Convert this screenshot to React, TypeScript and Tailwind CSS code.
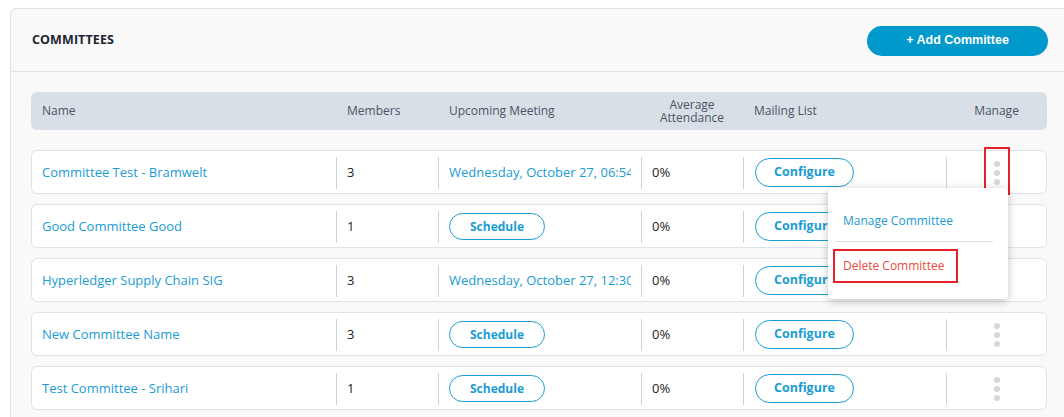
import React from 'react';

type Row = {
  name: string;
  members: string;
  meeting?: string;
  highlighted?: boolean;
};

const rows: Row[] = [
  { name: 'Committee Test - Bramwelt', members: '3', meeting: 'Wednesday, October 27, 06:54 PM', highlighted: true },
  { name: 'Good Committee Good', members: '1' },
  { name: 'Hyperledger Supply Chain SIG', members: '3', meeting: 'Wednesday, October 27, 12:30 PM' },
  { name: 'New Committee Name', members: '3' },
  { name: 'Test Committee - Srihari', members: '1' },
];

const Dots: React.FC<{ highlighted?: boolean }> = ({ highlighted }) => (
  <div className="relative flex flex-col items-center gap-[3px]">
    <span className="w-[6px] h-[6px] rounded-full bg-[#d5d9de]" />
    <span className="w-[6px] h-[6px] rounded-full bg-[#d5d9de]" />
    <span className="w-[6px] h-[6px] rounded-full bg-[#d5d9de]" />
    {highlighted && (
      <div className="absolute -left-[10px] -top-[14px] w-[26px] h-[48px] border-2 border-[#e5202a]" />
    )}
  </div>
);

const CommitteeRow: React.FC<{ row: Row }> = ({ row }) => (
  <div className="flex items-center h-[44px] pt-[1px] border border-[#dde3ea] rounded-[6px] bg-white">
    <div className="w-[304px] pl-[10px] text-[13px] text-[#1a9cd3] truncate">{row.name}</div>
    <div className="w-[102px] h-[32px] flex items-center border-l border-[#cfd3d8] pl-[10px] text-[13px] text-[#222]">
      {row.members}
    </div>
    <div className="w-[203px] h-[32px] flex items-center border-l border-[#cfd3d8] pl-[10px] pr-[10px] overflow-hidden">
      {row.meeting ? (
        <span className="block w-[182px] text-[13px] text-[#1a9cd3] whitespace-nowrap overflow-hidden">{row.meeting}</span>
      ) : (
        <button className="w-[96px] h-[27px] rounded-full border border-[#1a9cd3] text-[12px] font-bold text-[#1a9cd3] bg-white">
          Schedule
        </button>
      )}
    </div>
    <div className="w-[102px] h-[32px] flex items-center border-l border-[#cfd3d8] pl-[10px] text-[13px] text-[#222]">
      0%
    </div>
    <div className="w-[203px] h-[32px] flex items-center border-l border-[#cfd3d8] pl-[11px]">
      <button className="w-[99px] h-[29px] rounded-full border border-[#1a9cd3] text-[12.5px] font-bold text-[#1a9cd3] bg-white">
        Configure
      </button>
    </div>
    <div className="flex-1 h-[32px] flex items-center justify-center border-l border-[#cfd3d8]">
      <Dots highlighted={row.highlighted} />
    </div>
  </div>
);

export default function App() {
  return (
    <div className="w-[1064px] h-[417px] overflow-hidden bg-white pl-[10px] pt-[8px] font-['Open_Sans',sans-serif]">
      <div className="relative w-[1058px] h-[420px] bg-[#f9f9f9] border border-[#dde2ea] rounded-tl-[6px]">
        {/* Header */}
        <div className="h-[63px] flex items-center justify-between pl-[21px] pr-[20px] border-b border-[#dde2ea]">
          <h1 className="text-[12.5px] font-bold text-[#1e2530] tracking-[0.1px]">COMMITTEES</h1>
          <button className="w-[181px] h-[30px] ml-[1px] mr-[-1px] mt-[1px] rounded-full bg-[#0099cc] text-white text-[12.5px] font-bold font-['Liberation_Sans',sans-serif]">
            + Add Committee
          </button>
        </div>

        <div className="px-[20px] pt-[20px]">
          {/* Table header */}
          <div className="flex items-center h-[38px] rounded-[6px] bg-[#d9dfe6] text-[12px] text-[#4a5565]">
            <div className="w-[305px] pl-[11px]">Name</div>
            <div className="w-[102px] pl-[11px]">Members</div>
            <div className="w-[203px] pl-[11px]">Upcoming Meeting</div>
            <div className="w-[102px] flex flex-col items-center leading-[13px]">
              <span>Average</span>
              <span>Attendance</span>
            </div>
            <div className="w-[203px] pl-[11px]">Mailing List</div>
            <div className="flex-1 text-center">Manage</div>
          </div>

          {/* Rows */}
          <div className="mt-[20px] flex flex-col gap-[10px]">
            {rows.map((r) => (
              <CommitteeRow key={r.name} row={r} />
            ))}
          </div>
        </div>

        {/* Dropdown menu */}
        <div className="absolute left-[817px] top-[179px] w-[180px] h-[111px] bg-white rounded-[4px] shadow-[0_2px_8px_rgba(0,0,0,0.25)] px-[7px] pt-[24px]">
          <div className="pl-[8px] text-[12px] text-[#1a9cd3]">Manage Committee</div>
          <div className="mt-[11px] h-px bg-[#dcdfe3] w-[158px]" />
          <div className="mt-[7px] -ml-[2px] w-[125px] h-[34px] border-2 border-[#e5202a] flex items-center pl-[8px] text-[12px] text-[#ea4a3e]">
            Delete Committee
          </div>
        </div>
      </div>
    </div>
  );
}
